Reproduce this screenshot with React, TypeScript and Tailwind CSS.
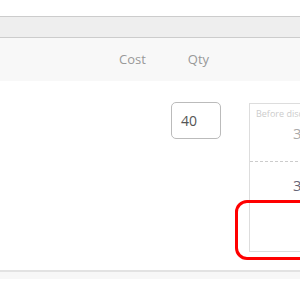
export default function App() {
  return (
    <div className="w-[300px] h-[300px] overflow-hidden bg-white font-['Open_Sans',_'Noto_Sans',_sans-serif] relative">
      <div className="h-[16px]" />
      <div className="h-[22px] bg-[#eeeeee] border-y border-[#cccccc]" />
      <div className="h-[43px] bg-[#f8f8f8] flex items-center text-[13px] text-[#999999]">
        <span className="ml-[119px]">Cost</span>
        <span className="ml-[42px]">Qty</span>
      </div>
      <div className="h-[189px] flex items-start">
        <div className="ml-[171px] mt-[21px] w-[50px] h-[37px] shrink-0 rounded-[5px] border border-[#bbbbbb] flex items-center pl-[9px] text-[14px] text-[#555555]">
          40
        </div>
        <div className="ml-[28px] mt-[22px] w-[100px] h-[149px] shrink-0 border border-[#dddddd] flex flex-col">
          <div className="h-[58px] border-b border-dashed border-[#cccccc] flex flex-col pl-[6px]">
            <span className="text-[9px] text-[#cccccc] mt-[4px] leading-[12px] whitespace-nowrap">Before discount</span>
            <span className="text-[15px] text-[#aaaaaa] ml-[37px] mt-[3px] leading-[20px]">30.00</span>
          </div>
          <div className="pl-[43px] pt-[13px] text-[15px] text-[#666677] leading-[20px]">30.00</div>
        </div>
      </div>
      <div className="h-[9px] border-t-2 border-[#e2e2e2] bg-[#f7f7f7]" />
      <div className="absolute left-[235px] top-[200px] w-[90px] h-[60px] border-[3px] border-[#ff0000] rounded-[12px]" />
    </div>
  );
}
